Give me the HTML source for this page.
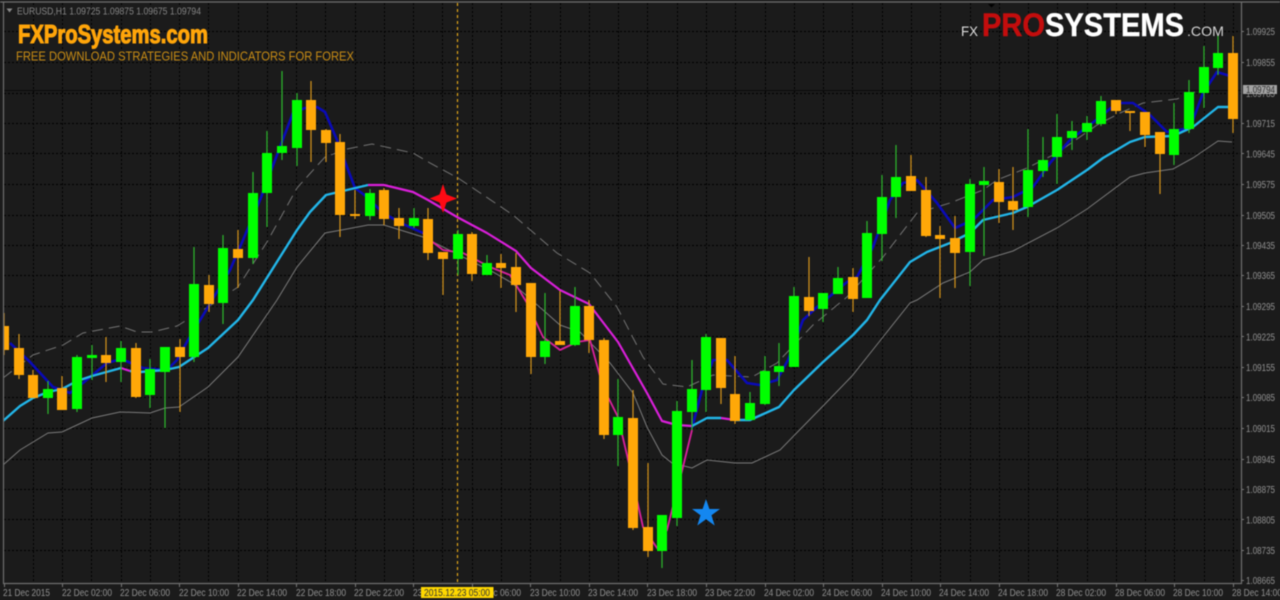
<!DOCTYPE html>
<html><head><meta charset="utf-8"><title>EURUSD,H1</title>
<style>html,body{margin:0;padding:0;background:#1b1b1b;width:1280px;height:600px;overflow:hidden}svg{display:block;filter:blur(.45px)}text{font-family:"Liberation Sans",sans-serif}</style></head>
<body>
<svg width="1280" height="600" viewBox="0 0 1280 600" xmlns="http://www.w3.org/2000/svg">
<rect width="1280" height="600" fill="#1b1b1b"/>
<!-- grid -->
<path fill="none" stroke="#000" stroke-width="1" stroke-dasharray="2 2" d="M4 31.5H1241M4 62.5H1241M4 93.5H1241M4 123.5H1241M4 153.5H1241M4 184.5H1241M4 215.5H1241M4 245.5H1241M4 275.5H1241M4 306.5H1241M4 336.5H1241M4 367.5H1241M4 397.5H1241M4 428.5H1241M4 459.5H1241M4 489.5H1241M4 519.5H1241M4 550.5H1241"/>
<path fill="none" stroke="#000" stroke-width="1" stroke-dasharray="2 2" d="M33.5 3V583M62.5 3V583M91.5 3V583M121.5 3V583M150.5 3V583M179.5 3V583M208.5 3V583M238.5 3V583M267.5 3V583M296.5 3V583M325.5 3V583M355.5 3V583M384.5 3V583M413.5 3V583M442.5 3V583M472.5 3V583M501.5 3V583M530.5 3V583M560.5 3V583M589.5 3V583M618.5 3V583M647.5 3V583M677.5 3V583M706.5 3V583M735.5 3V583M765.5 3V583M794.5 3V583M823.5 3V583M852.5 3V583M882.5 3V583M911.5 3V583M940.5 3V583M970.5 3V583M999.5 3V583M1028.5 3V583M1057.5 3V583M1087.5 3V583M1116.5 3V583M1145.5 3V583M1174.5 3V583M1204.5 3V583M1233.5 3V583"/>
<!-- price line and crosshair -->
<path d="M4 90.5H1241" stroke="#0a0a0a" stroke-width="1"/>
<path d="M457.5 3V583" stroke="#e5a818" stroke-width="1.2" stroke-dasharray="3 3" fill="none"/>
<!-- bands -->
<path fill="none" stroke="#7a7a7a" stroke-width="1" d="M3 465L20 450L48 433L62 432L92 418L120 412L150 413L165 408L179 407L208 387L238 357L277 300L297 267L325 233L347 229L368 225L384 225L423 237L493 272L512 283L543 310L560 325L580 332L610 363L633 393L647 427L662 455L672 463L692 468L707 460L735 463L752 463L780 450L823 406L852 376L883 337L910 303L917 300L943 283L970 272L983 260L1013 251L1057 228L1087 209L1130 177L1145 173L1173 169L1193 158L1218 141L1232 142"/>
<path fill="none" stroke="#747474" stroke-width="1" stroke-dasharray="11 6" d="M3 378L33 355L63 345L83 333L120 326L137 332L152 332L177 326L208 307L238 287L267 242L297 188L325 157L347 149L372 144L413 153L430 163L458 178L513 215L557 253L590 273L617 307L643 357L663 384L687 387L713 375L752 377L777 363L813 325L847 297L883 257L917 213L950 203L983 190L997 180L1027 168L1057 153L1097 125L1120 113L1143 103L1177 99L1205 88"/>
<!-- fast line -->
<path fill="none" stroke="#0a0ab8" stroke-width="2.6" stroke-linejoin="round" d="M10 343L30 362L53 387L62 390L70 393L83 383L107 363L121 359L143 368L167 370L177 360L188 340L208 307L230 270L243 240L260 200L280 147L293 113L305 108L317 107L325 112L337 140L347 167L355 188L367 197L383 213L403 224L423 233"/>
<path fill="none" stroke="#d8209c" stroke-width="1.8" stroke-linejoin="round" d="M423 233L430 240L443 250L463 253L490 267L510 275L527 303L543 337L560 350L577 342L590 340L603 387L618 417L627 455L643 527L657 548L667 530L672 510L683 467L692 430"/>
<path fill="none" stroke="#0a0ab8" stroke-width="2.6" stroke-linejoin="round" d="M692 428L702 390L713 360L727 360L747 383L760 385L777 380L788 360L803 320L817 307L847 282L857 277L873 247L890 200L903 183L917 180L937 203L955 228L973 220L993 200L1013 197L1033 187L1050 163L1070 140L1100 117L1117 103L1133 103L1150 115L1167 132L1190 128L1203 93L1217 72L1230 76"/>
<!-- middle line -->
<path fill="none" stroke="#22b5e8" stroke-width="2.4" stroke-linejoin="round" d="M3 421L20 406L33 398L48 392L62 389L77 381L92 376L121 368M130 371L140 372L165 370L179 367L208 348L238 320L253 300L297 230L310 212L326 195L347 190L368 185"/>
<path fill="none" stroke="#d91fd9" stroke-width="2.2" stroke-linejoin="round" d="M121 368L130 371M368 185L384 185L413 192L428 200L457 217L487 233L516 251L531 268L560 290L589 304L618 342L647 393L662 421L677 425L692 426M721 418L735 420"/>
<path fill="none" stroke="#22b5e8" stroke-width="2.4" stroke-linejoin="round" d="M692 426L707 418L721 418M735 420L750 420L779 407L794 390L823 362L853 335L867 320L880 300L910 262L927 252L950 243L970 233L983 220L1013 213L1027 207L1057 190L1087 170L1103 158L1130 142L1145 137L1173 136L1193 127L1218 107L1228 107"/>
<!-- wicks -->
<path stroke="#2eb82e" stroke-width="1.2" fill="none" d="M48 381V414M77 355V412M92 345V380M121 341V382M150 359V408M165 347V428M194 247V362M223 235V324M253 172V264M267 131V227M282 71V160M297 93V166M370 189V220M414 208V228M458 230V275M487 255V275M545 293V364M575 287V346M618 379V466M662 515V568M677 401V526M692 360V430M706 334V412M750 392V420M765 356V405M779 343V386M794 287V367M823 293V322M838 267V294M867 221V298M882 175V261M896 145V218M970 179V286M984 167V256M1028 129V217M1043 137V177M1057 114V184M1072 121V150M1087 116V140M1101 96V126M1174 103V165M1189 80V133M1204 46V108M1218 35V75"/>
<path stroke="#d6951c" stroke-width="1.2" fill="none" d="M4 313V355M19 334V379M33 370V398M62 376V410M106 337V382M136 343V398M180 339V412M209 275V312M238 230V288M311 81V162M326 129V162M340 134V237M355 190V219M384 188V225M399 208V239M428 208V260M443 252V295M472 232V281M501 254V288M516 253V312M531 283V374M560 291V345M589 300V353M604 338V439M633 390V530M648 463V557M721 338V404M735 356V424M809 257V316M853 268V312M911 155V191M926 177V237M940 226V298M955 216V288M999 169V223M1013 167V230M1116 100V114M1130 111V131M1145 112V147M1160 132V194M1233 36V133"/>
<!-- bodies -->
<path fill="#00ff00" d="M43 389h10v9h-10zM72 357h10v52h-10zM87 355h10v3h-10zM116 348h10v14h-10zM145 369h10v26h-10zM160 347h10v25h-10zM189 284h10v73h-10zM218 248h10v55h-10zM248 193h10v65h-10zM262 153h10v40h-10zM277 146h10v7h-10zM292 100h10v48h-10zM365 193h10v23h-10zM409 218h10v8h-10zM453 234h10v25h-10zM482 263h10v12h-10zM540 341h10v16h-10zM570 306h10v39h-10zM613 417h10v18h-10zM657 515h10v36h-10zM672 411h10v107h-10zM687 389h10v23h-10zM701 337h10v53h-10zM745 403h10v17h-10zM760 371h10v33h-10zM774 366h10v6h-10zM789 296h10v71h-10zM818 293h10v16h-10zM833 278h10v16h-10zM862 233h10v65h-10zM877 197h10v37h-10zM891 177h10v20h-10zM965 184h10v68h-10zM979 181h10v4h-10zM1023 170h10v37h-10zM1038 160h10v11h-10zM1052 137h10v20h-10zM1067 131h10v7h-10zM1082 123h10v9h-10zM1096 101h10v23h-10zM1169 129h10v26h-10zM1184 92h10v37h-10zM1199 67h10v26h-10zM1213 53h10v15h-10z"/>
<path fill="#ffa808" d="M-1 326h10v24h-10zM14 348h10v27h-10zM28 375h10v23h-10zM57 388h10v22h-10zM101 355h10v8h-10zM131 348h10v49h-10zM175 347h10v10h-10zM204 285h10v19h-10zM233 249h10v9h-10zM306 100h10v30h-10zM321 130h10v13h-10zM335 142h10v73h-10zM350 214h10v2h-10zM379 190h10v29h-10zM394 218h10v8h-10zM423 219h10v34h-10zM438 252h10v7h-10zM467 234h10v40h-10zM496 263h10v5h-10zM511 267h10v18h-10zM526 283h10v74h-10zM555 341h10v4h-10zM584 306h10v34h-10zM599 340h10v95h-10zM628 418h10v110h-10zM643 527h10v24h-10zM716 338h10v50h-10zM730 394h10v27h-10zM804 297h10v14h-10zM848 277h10v22h-10zM906 176h10v15h-10zM921 190h10v46h-10zM935 235h10v4h-10zM950 238h10v15h-10zM994 182h10v20h-10zM1008 201h10v9h-10zM1111 100h10v11h-10zM1125 111h10v2h-10zM1140 112h10v23h-10zM1155 132h10v22h-10zM1228 53h10v66h-10z"/>
<!-- stars -->
<path fill="#ff0a14" d="M443 184L446.500 194.500L457 198.500L446.500 202.500L443 213L439.500 202.500L429.500 198.500L439.500 194.500Z"/>
<path fill="#1487f0" d="M706 499L709.400 509H720L711.500 515.200L714.700 525.500L706 519.300L697.300 525.500L700.500 515.200L692 509H702.600Z"/>
<!-- frame covers -->
<rect x="0" y="0" width="3" height="600" fill="#1b1b1b"/>
<rect x="1242" y="3" width="38" height="597" fill="#1b1b1b"/>
<rect x="3" y="584" width="1239" height="16" fill="#1b1b1b"/>
<path fill="none" stroke="#6f6f6f" stroke-width="1.2" d="M3.500 2.500V583.500H1241.500V2.500M0 2H1280"/>
<!-- ticks -->
<path stroke="#777" stroke-width="1" fill="none" d="M4.500 584V587M62.500 584V587M121.500 584V587M179.500 584V587M238.500 584V587M296.500 584V587M355.500 584V587M413.500 584V587M472.500 584V587M530.500 584V587M589.500 584V587M647.500 584V587M706.500 584V587M765.500 584V587M823.500 584V587M882.500 584V587M940.500 584V587M999.500 584V587M1057.500 584V587M1116.500 584V587M1174.500 584V587M1233.500 584V587M1241 31.500h3M1241 62.500h3M1241 123.500h3M1241 153.500h3M1241 184.500h3M1241 215.500h3M1241 245.500h3M1241 275.500h3M1241 306.500h3M1241 336.500h3M1241 367.500h3M1241 397.500h3M1241 428.500h3M1241 459.500h3M1241 489.500h3M1241 519.500h3M1241 550.500h3M1241 580.500h3"/>
<!-- header -->
<path d="M6.500 8.500h6l-3 4z" fill="#888"/>
<text x="17" y="14.500" font-size="10" fill="#858585" textLength="184" lengthAdjust="spacingAndGlyphs">EURUSD,H1  1.09725 1.09875 1.09675 1.09794</text>
<!-- brand -->
<text x="18" y="43" font-size="26" font-weight="700" fill="#ffa50a" stroke="#ffa50a" stroke-width="1.1" textLength="190" lengthAdjust="spacingAndGlyphs">FXProSystems.com</text>
<text x="16" y="60.500" font-size="12.500" fill="#c98d15" textLength="338" lengthAdjust="spacingAndGlyphs">FREE DOWNLOAD STRATEGIES AND INDICATORS FOR FOREX</text>
<!-- logo -->
<path d="M988 4h7l-3.500 3.500z" fill="#000"/>
<text x="961" y="36" font-size="14" fill="#dedede" textLength="17" lengthAdjust="spacingAndGlyphs">FX</text>
<text x="982" y="36" font-size="32" font-weight="700" fill="#c30d0d" stroke="#c30d0d" stroke-width=".5" textLength="63" lengthAdjust="spacingAndGlyphs">PRO</text>
<text x="1045" y="36" font-size="32" font-weight="700" fill="#fff" stroke="#fff" stroke-width=".4" textLength="139" lengthAdjust="spacingAndGlyphs">SYSTEMS</text>
<text x="1187" y="36" font-size="14" fill="#d5d5d5" textLength="37" lengthAdjust="spacingAndGlyphs">.COM</text>
<!-- price axis -->
<g font-size="10" fill="#919191">
<text x="1246" y="35" textLength="29" lengthAdjust="spacingAndGlyphs">1.09925</text>
<text x="1246" y="66" textLength="29" lengthAdjust="spacingAndGlyphs">1.09855</text>
<text x="1246" y="97" textLength="29" lengthAdjust="spacingAndGlyphs">1.09785</text>
<text x="1246" y="127" textLength="29" lengthAdjust="spacingAndGlyphs">1.09715</text>
<text x="1246" y="157.500" textLength="29" lengthAdjust="spacingAndGlyphs">1.09645</text>
<text x="1246" y="188" textLength="29" lengthAdjust="spacingAndGlyphs">1.09575</text>
<text x="1246" y="219" textLength="29" lengthAdjust="spacingAndGlyphs">1.09505</text>
<text x="1246" y="249" textLength="29" lengthAdjust="spacingAndGlyphs">1.09435</text>
<text x="1246" y="279" textLength="29" lengthAdjust="spacingAndGlyphs">1.09365</text>
<text x="1246" y="310" textLength="29" lengthAdjust="spacingAndGlyphs">1.09295</text>
<text x="1246" y="340.500" textLength="29" lengthAdjust="spacingAndGlyphs">1.09225</text>
<text x="1246" y="371" textLength="29" lengthAdjust="spacingAndGlyphs">1.09155</text>
<text x="1246" y="401" textLength="29" lengthAdjust="spacingAndGlyphs">1.09085</text>
<text x="1246" y="432" textLength="29" lengthAdjust="spacingAndGlyphs">1.09015</text>
<text x="1246" y="463" textLength="29" lengthAdjust="spacingAndGlyphs">1.08945</text>
<text x="1246" y="493" textLength="29" lengthAdjust="spacingAndGlyphs">1.08875</text>
<text x="1246" y="523.500" textLength="29" lengthAdjust="spacingAndGlyphs">1.08805</text>
<text x="1246" y="554" textLength="29" lengthAdjust="spacingAndGlyphs">1.08735</text>
<text x="1246" y="584" textLength="29" lengthAdjust="spacingAndGlyphs">1.08665</text>
</g>
<rect x="1243" y="85" width="34" height="9" fill="#a3a3a3"/>
<text x="1246" y="93" font-size="10" fill="#333" textLength="29" lengthAdjust="spacingAndGlyphs">1.09794</text>
<!-- time axis -->
<g font-size="10" fill="#919191">
<text x="3" y="596" textLength="47" lengthAdjust="spacingAndGlyphs">21 Dec 2015</text>
<text x="62" y="596" textLength="50" lengthAdjust="spacingAndGlyphs">22 Dec 02:00</text>
<text x="120" y="596" textLength="50" lengthAdjust="spacingAndGlyphs">22 Dec 06:00</text>
<text x="179" y="596" textLength="50" lengthAdjust="spacingAndGlyphs">22 Dec 10:00</text>
<text x="237" y="596" textLength="50" lengthAdjust="spacingAndGlyphs">22 Dec 14:00</text>
<text x="296" y="596" textLength="50" lengthAdjust="spacingAndGlyphs">22 Dec 18:00</text>
<text x="354" y="596" textLength="50" lengthAdjust="spacingAndGlyphs">22 Dec 22:00</text>
<text x="413" y="596" textLength="50" lengthAdjust="spacingAndGlyphs">23 Dec 02:00</text>
<text x="471" y="596" textLength="50" lengthAdjust="spacingAndGlyphs">23 Dec 06:00</text>
<text x="530" y="596" textLength="50" lengthAdjust="spacingAndGlyphs">23 Dec 10:00</text>
<text x="588" y="596" textLength="50" lengthAdjust="spacingAndGlyphs">23 Dec 14:00</text>
<text x="647" y="596" textLength="50" lengthAdjust="spacingAndGlyphs">23 Dec 18:00</text>
<text x="705" y="596" textLength="50" lengthAdjust="spacingAndGlyphs">23 Dec 22:00</text>
<text x="764" y="596" textLength="50" lengthAdjust="spacingAndGlyphs">24 Dec 02:00</text>
<text x="822" y="596" textLength="50" lengthAdjust="spacingAndGlyphs">24 Dec 06:00</text>
<text x="881" y="596" textLength="50" lengthAdjust="spacingAndGlyphs">24 Dec 10:00</text>
<text x="939" y="596" textLength="50" lengthAdjust="spacingAndGlyphs">24 Dec 14:00</text>
<text x="998" y="596" textLength="50" lengthAdjust="spacingAndGlyphs">24 Dec 18:00</text>
<text x="1056" y="596" textLength="50" lengthAdjust="spacingAndGlyphs">28 Dec 02:00</text>
<text x="1115" y="596" textLength="50" lengthAdjust="spacingAndGlyphs">28 Dec 06:00</text>
<text x="1173" y="596" textLength="50" lengthAdjust="spacingAndGlyphs">28 Dec 10:00</text>
<text x="1232" y="596" textLength="50" lengthAdjust="spacingAndGlyphs">28 Dec 14:00</text>
</g>
<rect x="421" y="587" width="72.500" height="11" fill="#ffd800"/>
<text x="424" y="596" font-size="10" fill="#333" textLength="66" lengthAdjust="spacingAndGlyphs">2015.12.23 05:00</text>
</svg>
</body></html>
